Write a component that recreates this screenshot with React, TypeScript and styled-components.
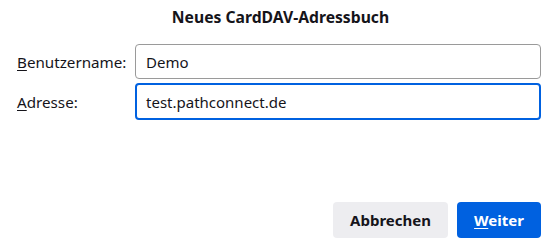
import React from "react";
import styled, { createGlobalStyle } from "styled-components";

const Global = createGlobalStyle`
  html, body { margin: 0; padding: 0; background: #ffffff; }
  body { font-family: "Noto Sans", "DejaVu Sans", sans-serif; color: #15141a; }
`;

const Dialog = styled.div`
  box-sizing: border-box;
  height: 246px;
  display: flex;
  flex-direction: column;
  padding: 0 12px 8px 17px;
`;

const Title = styled.h1`
  margin: 0;
  height: 34px;
  display: flex;
  align-items: center;
  justify-content: center;
  font-size: 15.7px;
  font-weight: 700;
  padding-left: 3px;
`;

const Form = styled.div`
  margin-top: 10px;
  display: grid;
  grid-template-columns: 118px 1fr;
  row-gap: 4px;
  align-items: center;
`;

const Label = styled.label`
  font-size: 15.2px;
`;

const Key = styled.span`
  text-decoration: underline;
  text-underline-offset: 2px;
`;

const Input = styled.div<{ $focused?: boolean }>`
  box-sizing: border-box;
  height: ${(p) => (p.$focused ? 37 : 35)}px;
  border: ${(p) => (p.$focused ? "2px solid #0061e0" : "1px solid #9a9a9a")};
  border-radius: 4px;
  display: flex;
  align-items: center;
  padding-left: ${(p) => (p.$focused ? 9 : 10)}px;
  font-size: 15px;
  color: #15141a;
`;

const Spacer = styled.div`
  flex: 1;
`;

const Buttons = styled.div`
  display: flex;
  justify-content: flex-end;
  gap: 9px;
`;

const Button = styled.button<{ $primary?: boolean; $width: number }>`
  width: ${(p) => p.$width}px;
  height: 36px;
  border: none;
  border-radius: 4px;
  font-family: inherit;
  font-size: 15px;
  font-weight: 700;
  padding: 0;
  background: ${(p) => (p.$primary ? "#0061e0" : "#ededf0")};
  color: ${(p) => (p.$primary ? "#ffffff" : "#15141a")};
`;

export default function App() {
  return (
    <>
      <Global />
      <Dialog>
        <Title>Neues CardDAV-Adressbuch</Title>
        <Form>
          <Label>
            <Key>B</Key>enutzername:
          </Label>
          <Input>Demo</Input>
          <Label>
            <Key>A</Key>dresse:
          </Label>
          <Input $focused>test.pathconnect.de</Input>
        </Form>
        <Spacer />
        <Buttons>
          <Button $width={115}>Abbrechen</Button>
          <Button $primary $width={84}>
            <Key>W</Key>eiter
          </Button>
        </Buttons>
      </Dialog>
    </>
  );
}
